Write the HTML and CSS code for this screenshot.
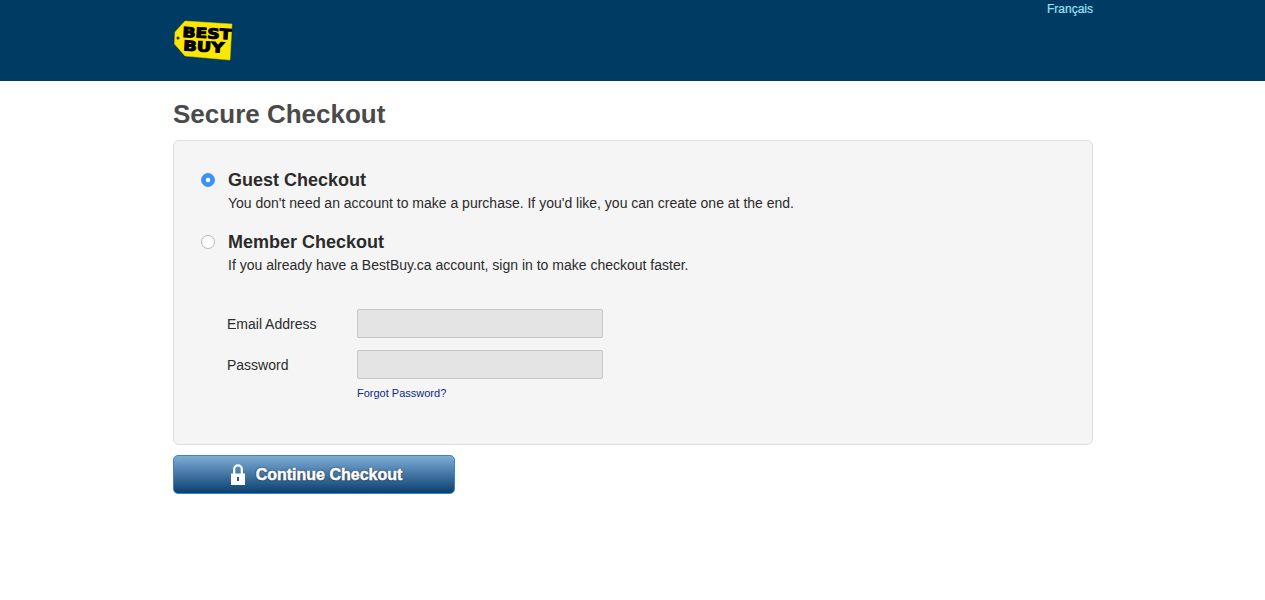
FILE: index.html
```html
<!DOCTYPE html>
<html lang="en">
<head>
  <meta charset="UTF-8" />
  <title>Secure Checkout</title>
  <link rel="stylesheet" href="styles.css">
</head>
<body>

  <div class="header">
    <div class="wrap header-inner">
      <svg class="logo" width="62" height="44" viewBox="0 0 62 44">
        <polygon points="12,2 59,5 57,41 12,37 1.500,25 2,13" fill="#ffe800" stroke="#e0cc00" stroke-width="0.5"/>
        <circle cx="5" cy="19" r="1.500" fill="#003b64"/>
        <g transform="rotate(3 30 22)">
          <text class="logo-text" x="9" y="19" textLength="49" lengthAdjust="spacingAndGlyphs">BEST</text>
          <text class="logo-text" x="10.500" y="32.500" textLength="41" lengthAdjust="spacingAndGlyphs">BUY</text>
        </g>
      </svg>
      <a class="lang" href="#">Français</a>
    </div>
  </div>

  <div class="wrap">
    <h1>Secure Checkout</h1>

    <div class="panel">
      <div class="option">
        <span class="radio radio-on"></span>
        <div>
          <h2>Guest Checkout</h2>
          <p>You don't need an account to make a purchase. If you'd like, you can create one at the end.</p>
        </div>
      </div>
      <div class="option">
        <span class="radio"></span>
        <div>
          <h2>Member Checkout</h2>
          <p>If you already have a BestBuy.ca account, sign in to make checkout faster.</p>
        </div>
      </div>

      <div class="signin">
        <div class="field">
          <label for="email">Email Address</label>
          <input type="text" id="email" disabled>
        </div>
        <div class="field">
          <label for="password">Password</label>
          <input type="password" id="password" disabled>
        </div>
        <a class="forgot" href="#">Forgot Password?</a>
      </div>
    </div>

    <button class="continue" type="button">
      <svg width="16" height="21" viewBox="0 0 16 21">
        <path d="M4.200 10V5.200a3.800 3.800 0 0 1 7.600 0V10" fill="none" stroke="#fff" stroke-width="2.200"/>
        <path d="M1 9.500h14V21H1z" fill="#fff"/>
        <rect x="7" y="13" width="2" height="4" fill="#1f5b8f"/>
      </svg>
      Continue Checkout
    </button>
  </div>

</body>
</html>
```

FILE: styles.css
```css
body {
  font-family: "Liberation Sans", Arial, sans-serif;
  margin: 0;
  background-color: #fff;
  color: #2b2b2b;
}

.wrap {
  width: 920px;
  margin-left: 173px;
}

.header {
  background-color: #003b64;
  height: 81px;
}

.header-inner {
  display: flex;
  justify-content: space-between;
  align-items: flex-start;
}

.logo {
  margin-top: 19px;
}

.logo-text {
  font-family: "DejaVu Sans", sans-serif;
  font-size: 14px;
  font-weight: bold;
  fill: #000;
  stroke: #000;
  stroke-width: 1px;
}

.lang {
  color: #9fe0f5;
  font-size: 12px;
  text-decoration: none;
  margin-top: 2px;
  -webkit-text-stroke: 0.2px #9fe0f5;
}

h1 {
  font-size: 26px;
  line-height: 30px;
  font-weight: bold;
  color: #4a4a4a;
  margin: 18px 0 11px;
}

.panel {
  height: 305px;
  box-sizing: border-box;
  background-color: #f5f5f5;
  border: 1px solid #dedede;
  border-radius: 6px;
  padding: 28px 27px 0;
}

.option {
  display: flex;
  gap: 13px;
  margin-bottom: 18px;
}

.option h2 {
  font-size: 18px;
  line-height: 22px;
  font-weight: bold;
  color: #2b2b2b;
  margin: 0;
}

.option p {
  font-size: 14px;
  line-height: 20px;
  margin: 2px 0 0;
}

.radio {
  flex: none;
  box-sizing: border-box;
  width: 14px;
  height: 14px;
  margin-top: 4px;
  border-radius: 50%;
  background-color: #fff;
  border: 1px solid #b5b5b5;
}

.radio-on {
  background: radial-gradient(circle, #fff 0 2px, #3b93f7 2.600px);
  border-color: #3b93f7;
}

.signin {
  margin: 34px 0 0 26px;
}

.field {
  display: flex;
  align-items: center;
  margin-bottom: 12px;
}

.field label {
  width: 130px;
  font-size: 14px;
}

.field input {
  width: 246px;
  height: 29px;
  box-sizing: border-box;
  background-color: #e4e4e4;
  border: 1px solid #c6c6c6;
  border-radius: 2px;
  padding: 0;
}

.forgot {
  display: block;
  margin: -4px 0 0 130px;
  font-size: 11px;
  color: #0a2a8c;
  text-decoration: none;
}

.continue {
  display: flex;
  align-items: center;
  justify-content: center;
  gap: 10px;
  box-sizing: border-box;
  width: 282px;
  height: 39px;
  margin-top: 10px;
  padding: 0 0 0 4px;
  border: 1px solid #3a84c9;
  border-radius: 5px;
  background: linear-gradient(#7dadd6, #0a3f70);
  color: #fff;
  font-family: inherit;
  font-size: 16px;
  font-weight: bold;
  -webkit-text-stroke: 0.5px #fff;
  text-shadow: 0 0 2px #000;
}
```
